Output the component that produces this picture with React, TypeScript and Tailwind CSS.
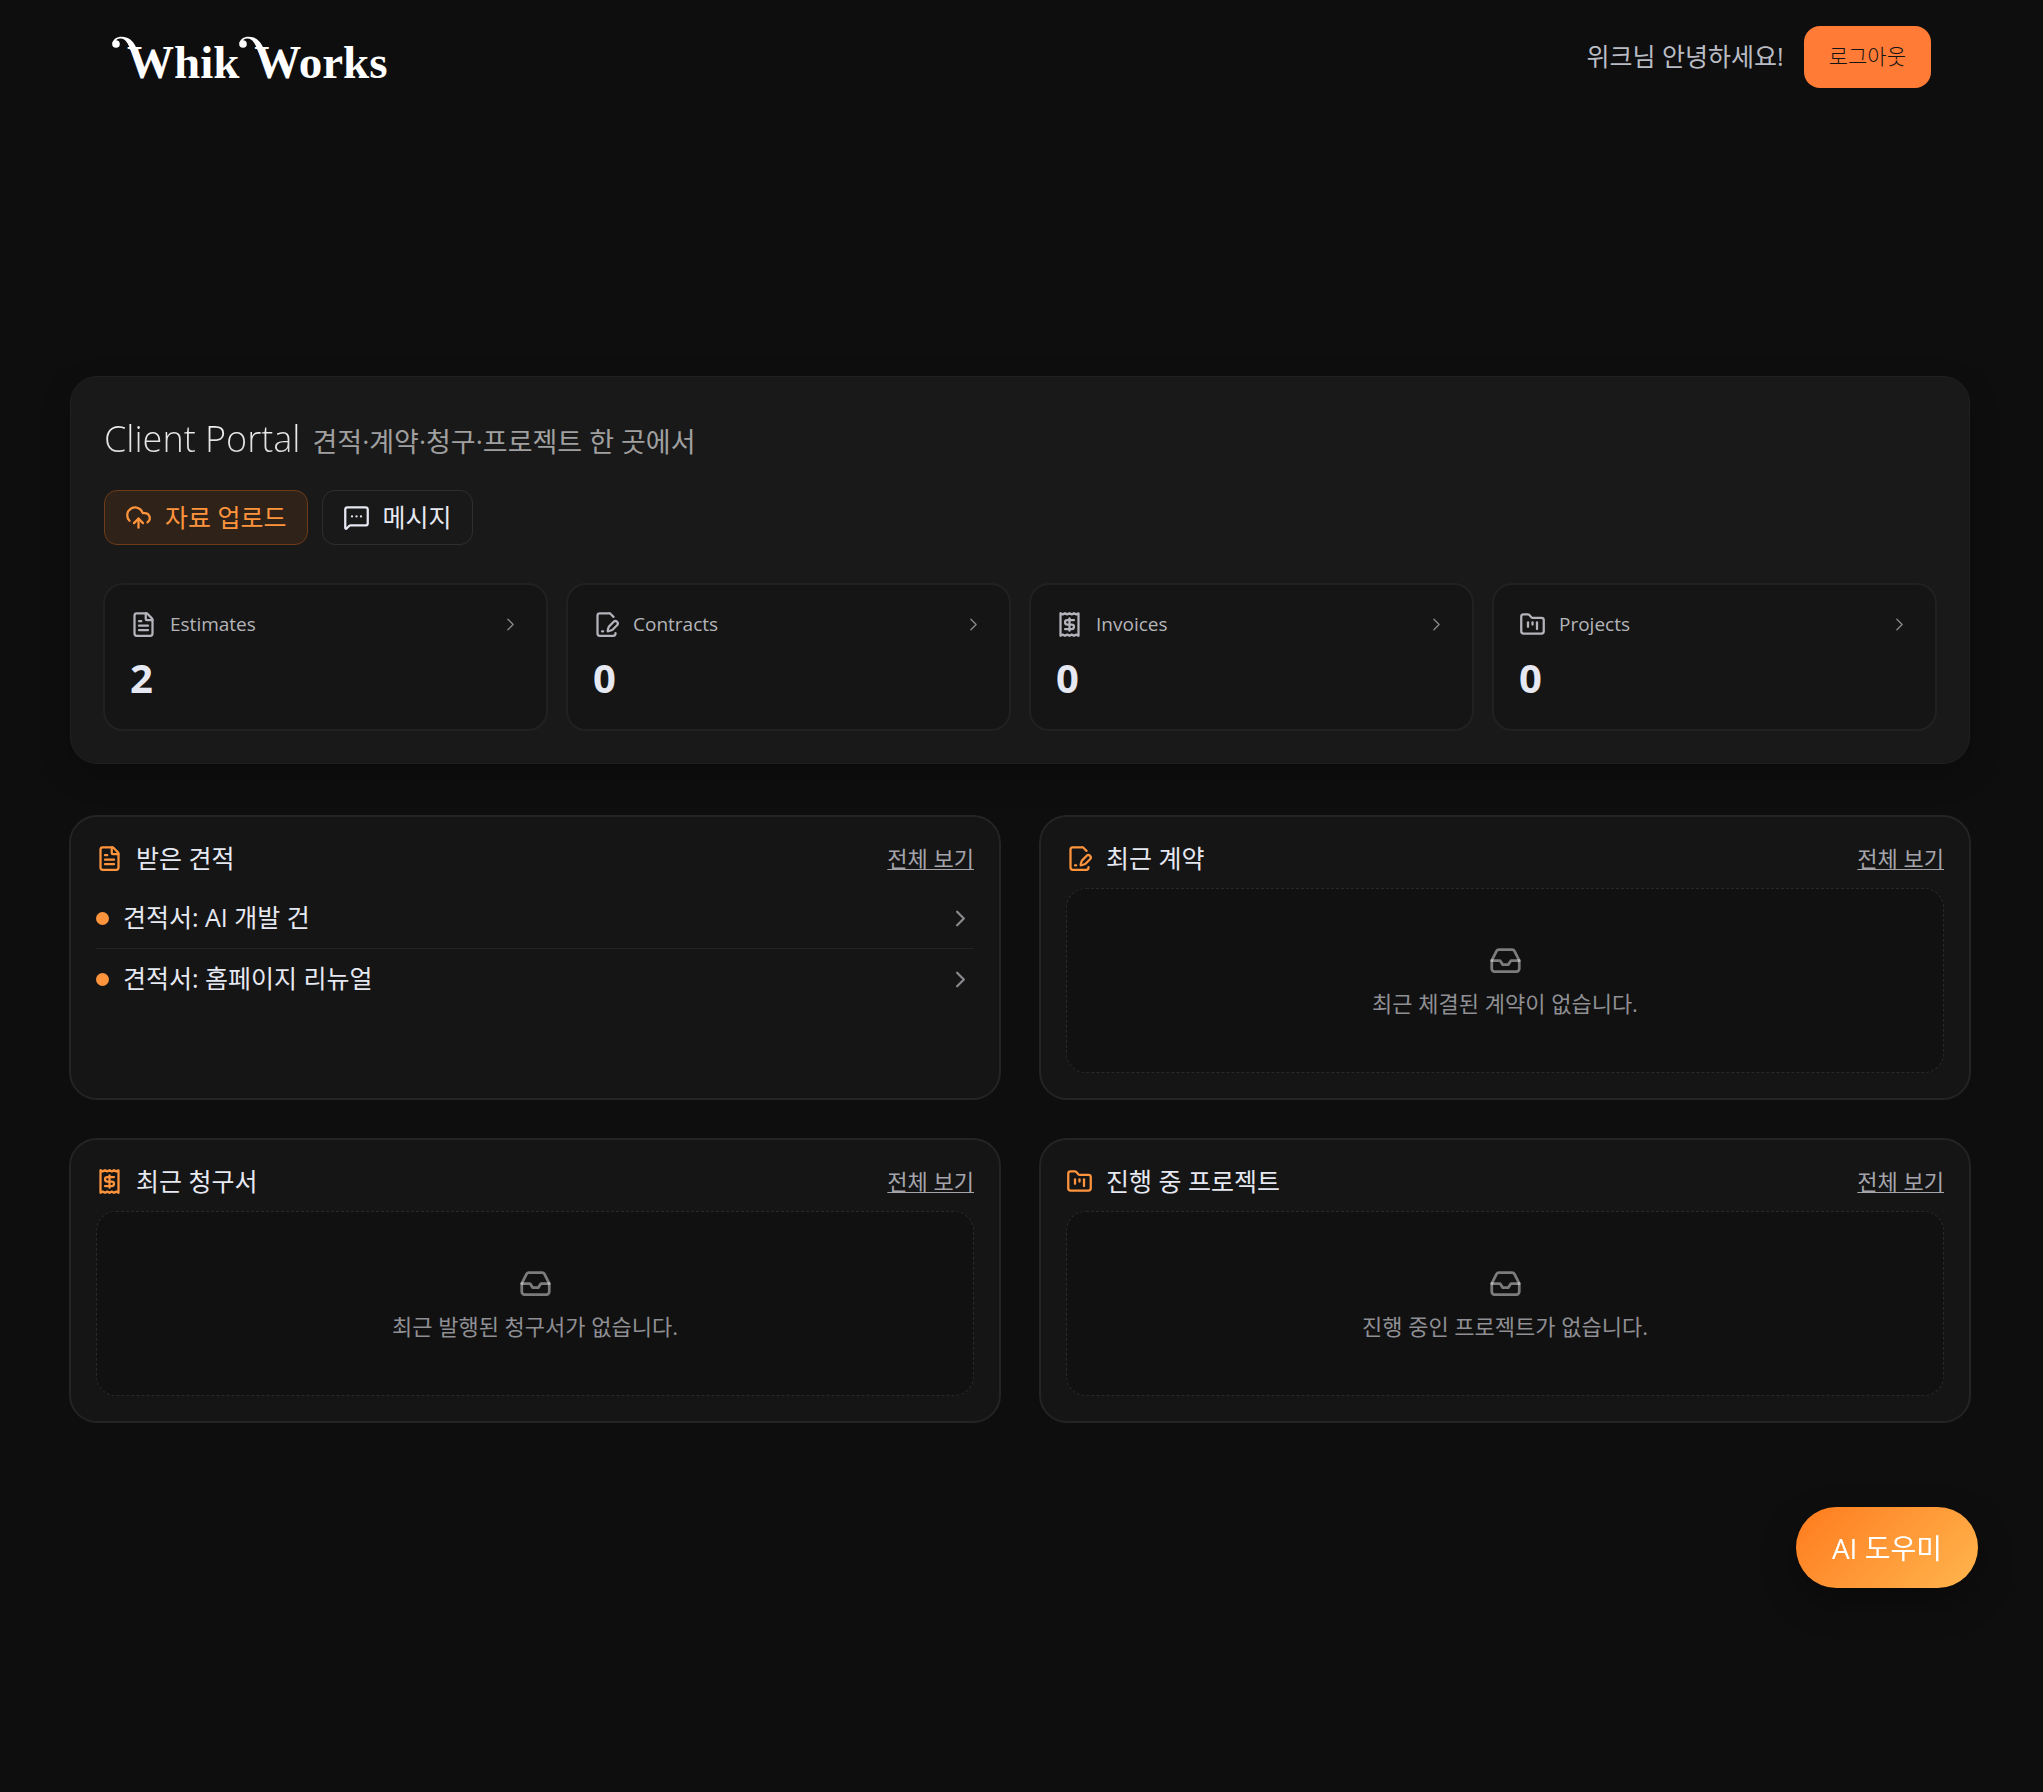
import type { ReactNode } from "react";
import {
  ChevronRight,
  CloudUpload,
  FilePenLine,
  FileText,
  FolderKanban,
  Inbox,
  MessageSquareMore,
  Receipt,
  type LucideIcon,
} from "lucide-react";

const stats: { label: string; value: number; icon: LucideIcon }[] = [
  { label: "Estimates", value: 2, icon: FileText },
  { label: "Contracts", value: 0, icon: FilePenLine },
  { label: "Invoices", value: 0, icon: Receipt },
  { label: "Projects", value: 0, icon: FolderKanban },
];

const estimates = ["견적서: AI 개발 건", "견적서: 홈페이지 리뉴얼"];

function LogoWord({ children }: { children: ReactNode }) {
  return (
    <span className="relative pl-[15px]">
      <svg
        aria-hidden="true"
        viewBox="0 0 34 36"
        className="absolute top-0 left-0 h-[36px] w-[34px]"
        fill="currentColor"
      >
        <circle cx="4" cy="8" r="3.8" />
        <path d="M0.4 7.6C1 3.4 4.6 0.8 9.6 0.8C16.4 0.8 20.6 4.6 23.4 10C25 13 26.6 17 29 24L24.4 26L18.6 14C16 7.6 13.6 3 9 2.6C5.8 2.4 3.6 4 3.2 6.4Z" />
      </svg>
      {children}
    </span>
  );
}

function Logo() {
  return (
    <a
      href="#"
      aria-label="WhikWorks"
      className="flex pt-2.5 font-['Liberation_Serif',serif] text-[47px] leading-[52px] font-bold text-white"
    >
      <LogoWord>Whik</LogoWord>
      <LogoWord>Works</LogoWord>
    </a>
  );
}

function StatCard({ label, value, icon: Icon }: { label: string; value: number; icon: LucideIcon }) {
  return (
    <a href="#" className="rounded-[20px] border-2 border-[#212121] bg-[#151515] p-[25px]">
      <div className="flex h-7 items-center gap-[13px]">
        <Icon className="size-[27px] text-[#b4b4bc]" strokeWidth={2} />
        <span className="flex-1 text-[19px] leading-7 text-[#b4b4b9]">{label}</span>
        <ChevronRight className="size-[21px] text-[#8a8a8e]" strokeWidth={1.5} />
      </div>
      <p className="mt-3.5 text-[40px] leading-[52px] font-bold text-[#e6e8f2]">{value}</p>
    </a>
  );
}

function Section({ title, icon: Icon, children }: { title: string; icon: LucideIcon; children: ReactNode }) {
  return (
    <section className="rounded-[28px] border-2 border-[#242424] bg-[#151515] p-[25px]">
      <header className="mb-[13px] flex h-[33px] items-center gap-[13px]">
        <Icon className="size-[27px] text-[#ff943d]" strokeWidth={2} />
        <h2 className="flex-1 text-[25px] leading-[33px] text-[#e6e8f2]">{title}</h2>
        <a href="#" className="text-[22px] leading-[33px] text-[#a4a4aa] underline decoration-1 underline-offset-2">
          전체 보기
        </a>
      </header>
      {children}
    </section>
  );
}

function Empty({ children }: { children: ReactNode }) {
  return (
    <div className="flex h-[185px] flex-col items-center justify-center gap-[10px] rounded-[20px] border border-dashed border-[#2a2a2a] bg-[#111111] pt-0.5">
      <Inbox className="size-[33px] text-white/45" strokeWidth={2} />
      <p className="text-[22px] leading-[33px] text-[#8f8f94]">{children}</p>
    </div>
  );
}

export default function App() {
  return (
    <div className="min-h-screen bg-[#0e0e0e] font-['Open_Sans','Noto_Sans_CJK_KR',sans-serif] text-[#e6e8f2]">
      <header className="flex items-center justify-between pt-[26px] pr-28 pl-28">
        <Logo />
        <div className="flex items-center gap-5">
          <span className="text-[25px] text-[#b9bcc4]">위크님 안녕하세요!</span>
          <button className="h-[62px] rounded-2xl bg-[#ff7b36] px-[25px] text-[21px] font-light text-[#141414]">
            로그아웃
          </button>
        </div>
      </header>

      <main className="pt-[288px] pr-[72px] pb-16 pl-[69px]">
        <section className="mx-px rounded-[27px] border border-[#202020] bg-[#191919] px-8 pt-[34px] pb-8 shadow-[0_12px_32px_rgba(0,0,0,0.2)]">
          <div className="flex h-14 items-baseline gap-3 px-px">
            <h1 className="bg-linear-to-b from-white to-[#cfcfcf] bg-clip-text text-[36px] leading-[56px] font-light text-transparent">
              Client Portal
            </h1>
            <p className="text-[27px] text-[#a0a0a0]">견적·계약·청구·프로젝트 한 곳에서</p>
          </div>
          <div className="mt-[23px] flex gap-3.5 px-px">
            <button className="flex h-[55px] items-center gap-[13px] rounded-[13px] border border-[#6e3b18] bg-[#2f2219] px-5 text-[25px] text-[#ff943d]">
              <CloudUpload className="size-[27px]" strokeWidth={2} />
              자료 업로드
            </button>
            <button className="flex h-[55px] items-center gap-[13px] rounded-[13px] border border-[#2e2e2e] px-5 text-[25px]">
              <MessageSquareMore className="size-[27px]" strokeWidth={2} />
              메시지
            </button>
          </div>
          <div className="mt-[38px] grid grid-cols-4 gap-[18px]">
            {stats.map((stat) => (
              <StatCard key={stat.label} {...stat} />
            ))}
          </div>
        </section>

        <div className="mt-[51px] grid grid-cols-2 gap-x-[38px] gap-y-[38px]">
          <Section title="받은 견적" icon={FileText}>
            <ul className="divide-y divide-[#242424]">
              {estimates.map((name) => (
                <li key={name}>
                  <a href="#" className="flex h-[60px] items-center gap-3.5">
                    <span className="size-[13px] rounded-full bg-[#ff943d]" />
                    <span className="flex-1 text-[25px]">{name}</span>
                    <ChevronRight className="size-[27px] text-[#8a8a8e]" strokeWidth={2} />
                  </a>
                </li>
              ))}
            </ul>
          </Section>
          <Section title="최근 계약" icon={FilePenLine}>
            <Empty>최근 체결된 계약이 없습니다.</Empty>
          </Section>
          <Section title="최근 청구서" icon={Receipt}>
            <Empty>최근 발행된 청구서가 없습니다.</Empty>
          </Section>
          <Section title="진행 중 프로젝트" icon={FolderKanban}>
            <Empty>진행 중인 프로젝트가 없습니다.</Empty>
          </Section>
        </div>
      </main>

      <button className="fixed right-[65px] bottom-[204px] h-[81px] rounded-full bg-linear-135 from-[#ff7a1a] to-[#ffb54d] px-9 text-[28px] text-white shadow-[0_14px_36px_rgba(0,0,0,0.3)]">
        AI 도우미
      </button>
    </div>
  );
}
